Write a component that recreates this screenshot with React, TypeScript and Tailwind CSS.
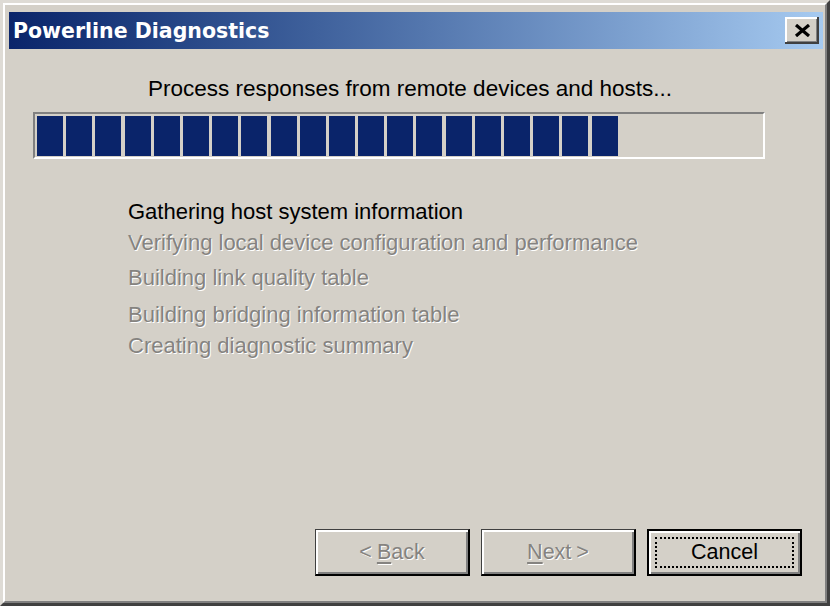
export default function App() {
  const blocks = Array.from({ length: 20 }, (_, i) => i);
  return (
    <div className="w-[832px] h-[607px] bg-white font-['Liberation_Sans',Arial,sans-serif]">
      <div className="w-[830px] h-[606px] bg-[#d4d0c8] border-t-[3px] border-l-[3px] border-t-[#dedbd5] border-l-[#dedbd5] border-r-[3px] border-b-[3px] border-r-[#404040] border-b-[#404040]">
        <div className="h-full flex flex-col border-t-2 border-l-2 border-t-white border-l-white border-r-2 border-b-2 border-r-[#808080] border-b-[#808080] pt-[7px] pl-[4px] pr-[2px]">
          {/* Title bar */}
          <div className="h-[37px] flex items-center justify-between bg-gradient-to-r from-[#0a246a] to-[#a6caf0] pl-[4px] pr-[4px]">
            <span className="font-['DejaVu_Sans',sans-serif] font-bold text-white text-[20.5px] leading-[24px] whitespace-nowrap">
              Powerline Diagnostics
            </span>
            <div className="w-[34px] h-[27px] bg-[#d4d0c8] flex items-center justify-center shadow-[inset_-2px_-2px_0_#404040,inset_2px_2px_0_#fff,inset_-3px_-3px_0_#808080]">
              <svg width="17" height="13" viewBox="0 0 17 13">
                <line x1="2" y1="1" x2="15" y2="12" stroke="#000" strokeWidth="3.2" />
                <line x1="15" y1="1" x2="2" y2="12" stroke="#000" strokeWidth="3.2" />
              </svg>
            </div>
          </div>

          {/* Heading */}
          <div className="mt-[27px] ml-[101px] w-[600px] text-center text-[22.5px] leading-[26px] text-black whitespace-nowrap">
            Process responses from remote devices and hosts...
          </div>

          {/* Progress bar */}
          <div className="mt-[10px] ml-[24px] w-[732px] h-[47px] border-t-2 border-l-2 border-t-[#808080] border-l-[#808080] border-b-2 border-r-2 border-b-white border-r-white pt-[2px] pb-[1px] pl-[2px] flex gap-[3.2px]">
            {blocks.map((i) => (
              <div key={i} className="w-[26px] h-full bg-[#0a246a]" />
            ))}
          </div>

          {/* Steps */}
          <div className="ml-[119px] flex flex-col text-[22px] leading-[26px] whitespace-nowrap">
            <div className="mt-[40px] text-black">Gathering host system information</div>
            <div className="mt-[5px] text-[#858380] [text-shadow:1px_1px_0_#fff]">
              Verifying local device configuration and performance
            </div>
            <div className="mt-[9px] text-[#858380] [text-shadow:1px_1px_0_#fff]">Building link quality table</div>
            <div className="mt-[11px] text-[#858380] [text-shadow:1px_1px_0_#fff]">Building bridging information table</div>
            <div className="mt-[5px] text-[#858380] [text-shadow:1px_1px_0_#fff]">Creating diagnostic summary</div>
          </div>

          <div className="flex-1" />

          {/* Buttons */}
          <div className="flex justify-end gap-[11px] pr-[21px] pb-[25px]">
            <div className="w-[155px] h-[47px] flex items-center justify-center border-t border-l border-t-[#404040] border-l-[#404040] border-r-2 border-b-2 border-r-black border-b-black shadow-[inset_2px_2px_0_#fff,inset_-2px_-2px_0_#808080] text-[21.5px] text-[#858380] [text-shadow:1px_1px_0_#fff]">
              &lt; <u className="ml-[5px] underline-offset-[3px]">B</u>ack
            </div>
            <div className="w-[155px] h-[47px] flex items-center justify-center border-t border-l border-t-[#404040] border-l-[#404040] border-r-2 border-b-2 border-r-black border-b-black shadow-[inset_2px_2px_0_#fff,inset_-2px_-2px_0_#808080] text-[21.5px] text-[#858380] [text-shadow:1px_1px_0_#fff]">
              <u className="underline-offset-[3px]">N</u>ext <span className="ml-[5px]">&gt;</span>
            </div>
            <div className="w-[155px] h-[47px] border-2 border-black shadow-[inset_2px_2px_0_#fff,inset_-2px_-2px_0_#808080] p-[6px]">
              <div className="w-full h-full border-2 border-dotted border-black flex items-center justify-center text-[21.5px] text-black">
                Cancel
              </div>
            </div>
          </div>
        </div>
      </div>
    </div>
  );
}
